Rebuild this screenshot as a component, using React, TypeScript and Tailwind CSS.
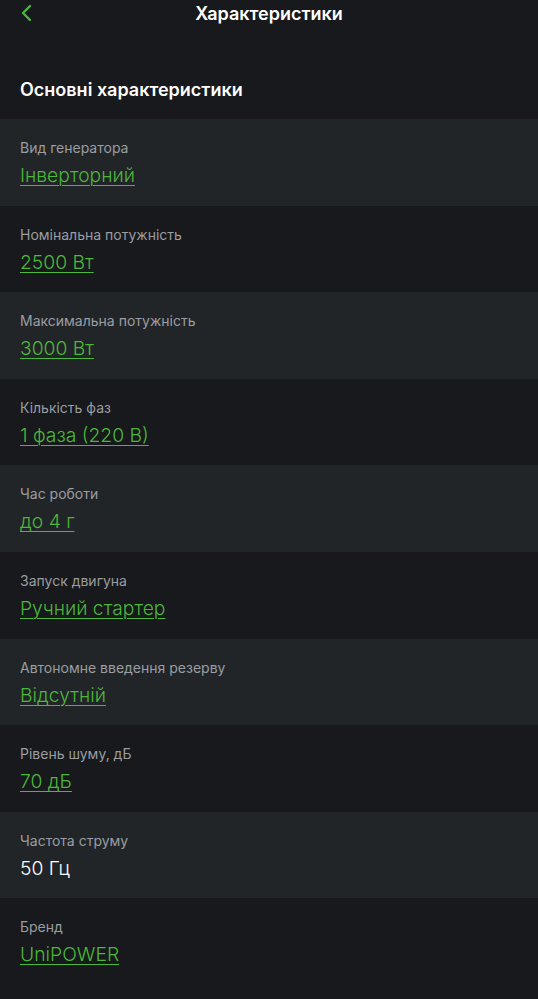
import React from "react";

const rows: { label: string; value: string; link: boolean }[] = [
  { label: "Вид генератора", value: "Інверторний", link: true },
  { label: "Номінальна потужність", value: "2500 Вт", link: true },
  { label: "Максимальна потужність", value: "3000 Вт", link: true },
  { label: "Кількість фаз", value: "1 фаза (220 В)", link: true },
  { label: "Час роботи", value: "до 4 г", link: true },
  { label: "Запуск двигуна", value: "Ручний стартер", link: true },
  { label: "Автономне введення резерву", value: "Відсутній", link: true },
  { label: "Рівень шуму, дБ", value: "70 дБ", link: true },
  { label: "Частота струму", value: "50 Гц", link: false },
  { label: "Бренд", value: "UniPOWER", link: true },
];

export default function App() {
  return (
    <div
      className="min-h-[999px] w-full bg-[#17191c] text-white"
      style={{ fontFamily: "Inter, 'Noto Sans', sans-serif" }}
    >
      <div className="relative flex h-[27px] items-center justify-center">
        <svg
          className="absolute left-[20px] top-[4px]"
          width="14"
          height="18"
          viewBox="0 0 14 18"
          fill="none"
        >
          <path d="M10 2 L3 9 L10 16" stroke="#4cb83a" strokeWidth="2.4" strokeLinecap="round" strokeLinejoin="round" />
        </svg>
        <div className="text-[18px] font-semibold leading-[26px] text-white">Характеристики</div>
      </div>
      <div className="px-5 pb-[16px] pt-[50px] text-[18px] font-semibold leading-[26px]">
        Основні характеристики
      </div>
      <div className="flex flex-col">
        {rows.map((r, i) => (
          <div
            key={r.label}
            className={`flex h-[86.6px] flex-col px-5 pt-[19px] ${i % 2 === 0 ? "bg-[#222528]" : "bg-[#17191c]"}`}
          >
            <div className="text-[14px] leading-5 text-[#9a9da1]">{r.label}</div>
            <div
              className={`mt-[4px] text-[19.3px] font-light leading-[26px] ${
                r.link ? "text-[#4cb83a] underline decoration-1 underline-offset-[3px]" : "text-white"
              }`}
            >
              {r.value}
            </div>
          </div>
        ))}
      </div>
    </div>
  );
}
